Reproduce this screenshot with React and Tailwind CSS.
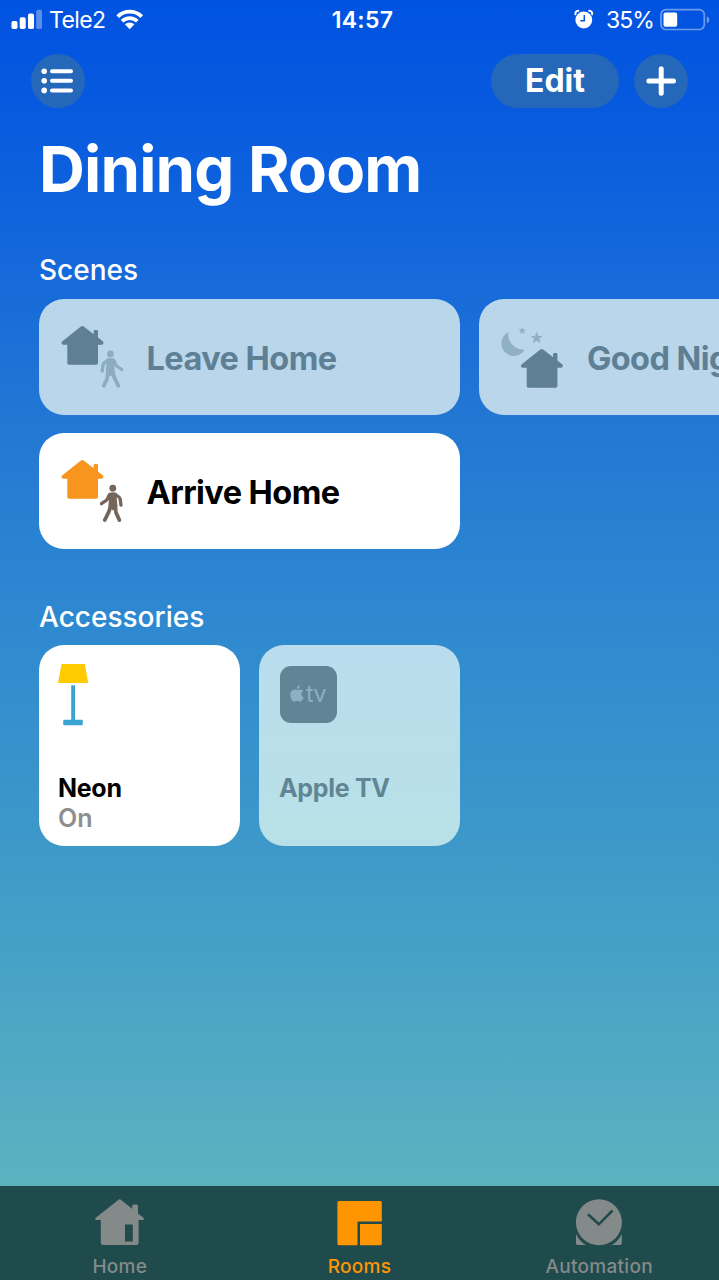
import React from "react";

function House({ x = 0, y = 0, fill }) {
  return (
    <path
      transform={`translate(${x} ${y})`}
      fill={fill}
      d="M28.9 11.5Q30.3 10.4 31.7 11.5L41.7 19.3V16.3Q41.7 15 43 15H44.7Q46 15 46 16.3V22.6L51 26.6Q52 27.8 51.1 29.1Q50.6 29.8 49.6 29.8H46V47.9Q46 49.7 44.2 49.7H17.1Q15.3 49.7 15.3 47.9V29.8H11.6Q10.4 29.8 9.8 29Q9 27.7 10.1 26.6Z"
    />
  );
}

function Walker({ color, transform }) {
  return (
    <g transform={transform} stroke={color} fill={color} strokeLinecap="round" strokeLinejoin="round">
      <circle cx="58.4" cy="39" r="3.4" stroke="none" />
      <path stroke="none" d="M55 43.6Q58.3 42.6 61.8 43.6L63.8 46.4L62.4 51.2L62.8 57.6L58.3 61.4L53.6 57.6L54.4 50Z" />
      <path fill="none" strokeWidth="3.3" d="M55.8 45.3L52.1 48.1Q51.1 48.9 51 50.3L50.2 56M61.8 45.5L64 50.1Q64.4 50.9 65.3 51.5L69.7 54.5" />
      <path fill="none" strokeWidth="3.8" d="M56 56.6L55.3 62.6Q55 64.2 54.2 65.6L51.9 70.8M60.4 56.6L62.3 62.4L66.4 70.8" />
    </g>
  );
}

function LeaveIcon() {
  return (
    <svg className="-mt-[3px] size-20 shrink-0" viewBox="0 0 80 80">
      <House fill="#5f7f94" />
      <Walker color="#8cacc0" />
    </svg>
  );
}

function ArriveIcon() {
  return (
    <svg className="-mt-[3px] size-20 shrink-0" viewBox="0 0 80 80">
      <House fill="#f8951f" />
      <Walker color="#74665b" transform="translate(119.2 .2) scale(-1 1)" />
    </svg>
  );
}

const STAR = "M0 -1L.25 -.33L.95 -.31L.4 .13L.59 .81L0 .42L-.59 .81L-.4 .13L-.95 -.31L-.25 -.33Z";

function NightIcon() {
  return (
    <svg className="-mt-[3px] size-20 shrink-0" viewBox="0 0 80 80">
      <path fill="#8fafc3" d="M16.4 17.2A12.5 12.5 0 1 0 32.8 34.6A15.3 15.3 0 0 1 16.4 17.2Z" />
      <path fill="#8fafc3" d={STAR} transform="translate(30.3 15.7) scale(3.9)" />
      <path fill="#8fafc3" d={STAR} transform="translate(44.7 23) scale(6.4)" />
      <House fill="#5f7f94" x={19.4} y={23} />
    </svg>
  );
}

function Scene({ icon, name, active }) {
  return (
    <div
      className={
        "flex h-[115.5px] w-[421px] shrink-0 items-center rounded-[25px] pl-[13px] text-[32.5px] font-bold " +
        (active ? "bg-white text-black" : "bg-[#b9d6eb] text-[#5f7f94]")
      }
    >
      {icon}
      <span className="ml-[14.5px] mt-[5px] whitespace-nowrap tracking-[-0.55px]">{name}</span>
    </div>
  );
}

function StatusBar() {
  return (
    <div className="grid h-10 grid-cols-[1fr_auto_1fr] items-center text-[23px] leading-10">
      <div className="flex items-center pl-[11px]">
        <svg className="h-10 w-8" viewBox="0 0 32 40" fill="white">
          <rect x=".5" y="21" width="6" height="8" rx="1.8" />
          <rect x="8.7" y="17.2" width="6" height="11.8" rx="1.8" />
          <rect x="17" y="13.4" width="6" height="15.6" rx="1.8" />
          <rect x="25.2" y="9.8" width="5.8" height="19.2" rx="1.8" opacity=".35" />
        </svg>
        <span className="ml-[6px] w-[57px] tracking-[-0.6px]">Tele2</span>
        <svg className="ml-[10px] h-10 w-7" viewBox="0 0 28 40" fill="none" stroke="white">
          <path strokeWidth="3.9" d="M1.7 16.6A17 17 0 0 1 25.7 16.6" />
          <path strokeWidth="3.7" d="M6.1 21.2A10.8 10.8 0 0 1 21.3 21.2" />
          <path fill="white" stroke="none" d="M8.9 24.3A7.2 7.2 0 0 1 18.5 24.3L13.7 29.2Z" />
        </svg>
      </div>
      <span className="ml-[6px] font-semibold tracking-[0.3px]">14:57</span>
      <div className="flex items-center justify-end pr-[9px]">
        <svg className="h-10 w-5" viewBox="0 0 20 40">
          <circle cx="9.8" cy="20" r="8.4" fill="white" />
          <path d="M1.5 14.2Q1 11.4 4.4 10.8M18.1 14.2Q18.6 11.4 15.2 10.8" fill="none" stroke="white" strokeWidth="2" strokeLinecap="round" />
          <path d="M10.3 15V20.8H6.3" fill="none" stroke="#0455dd" strokeWidth="1.5" />
        </svg>
        <span className="ml-[12px] w-[49px] whitespace-nowrap tracking-[-1px]">35%</span>
        <svg className="ml-[5px] h-10 w-[50px]" viewBox="0 0 50 40">
          <rect x="1" y="9.7" width="43.3" height="19.8" rx="5" fill="none" stroke="white" strokeOpacity=".42" strokeWidth="1.7" />
          <rect x="3.5" y="12.5" width="13.7" height="14.2" rx="2" fill="white" />
          <path d="M46.8 16.2Q49.4 17.4 49.4 19.7Q49.4 22 46.8 23.2Z" fill="white" opacity=".42" />
        </svg>
      </div>
    </div>
  );
}

function Toolbar() {
  return (
    <div className="mt-[14px] flex h-[54px] items-center pl-[31px] pr-[31px]">
      <button className="size-[54px] rounded-full bg-[#2567b9]">
        <svg className="size-[54px]" viewBox="0 0 54 54" fill="white">
          <circle cx="13.2" cy="17.2" r="2.8" />
          <circle cx="13.2" cy="26.8" r="2.8" />
          <circle cx="13.2" cy="36.4" r="2.8" />
          <path stroke="white" strokeWidth="4" strokeLinecap="round" d="M21 17.2H40M21 26.8H40M21 36.4H40" />
        </svg>
      </button>
      <button className="ml-auto h-[54px] w-[128px] rounded-full bg-[#2567b9] text-[32px] font-bold">
        Edit
      </button>
      <button className="ml-[15px] size-[54px] rounded-full bg-[#2567b9]">
        <svg className="size-[54px]" viewBox="0 0 54 54">
          <path stroke="white" strokeWidth="5" strokeLinecap="round" d="M27.2 14.7V39.3M14.9 27H39.5" />
        </svg>
      </button>
    </div>
  );
}

function Lamp() {
  return (
    <svg className="h-16 w-8" viewBox="0 0 32 64">
      <path fill="#ffcb00" d="M3.6 1H26.8L30.2 20H0Z" />
      <path fill="#3aa4d2" d="M13.2 22.3H17V57H13.2Z" />
      <rect x="5.2" y="56.8" width="19.6" height="5.5" rx="1.2" fill="#3aa4d2" />
    </svg>
  );
}

function AppleTvIcon() {
  return (
    <div className="flex h-[57px] w-[57.5px] items-center rounded-[11px] bg-[#608595] pl-[10px] text-[#8cb1c0]">
      <svg className="-mt-[2px] h-[17px] w-[14px] shrink-0" viewBox="0 0 14 17" fill="currentColor">
        <path d="M9.8 0Q10 1.7 8.9 2.9Q8 4 6.9 3.9Q6.8 2.4 7.8 1.3Q8.7 .2 9.8 0ZM7.1 5.1C7.9 5.1 8.7 4.3 10.1 4.4C11.6 4.5 12.6 5.2 13.2 6.1C10.5 7.8 10.9 11.3 13.6 12.4C12.9 14.3 11.7 16.5 10.2 16.6C9.1 16.7 8.7 15.9 7.2 15.9C5.8 15.9 5.4 16.6 4.3 16.6C2.4 16.7 .3 13.1 .3 10C.3 6.5 2.2 4.5 4.4 4.4C5.6 4.4 6.4 5.1 7.1 5.1Z" />
      </svg>
      <span className="-mt-px ml-[2.5px] text-[23px] font-normal leading-none tracking-[-0.4px]">tv</span>
    </div>
  );
}

function HomeTabIcon() {
  return (
    <svg className="h-[50px] w-[52px]" viewBox="0 0 52 50">
      <path
        fill="#838a89"
        fillRule="evenodd"
        d="M24.9 1.6Q25.7 1 26.5 1.6L38.2 10.7V8Q38.2 6.5 39.7 6.5H42.5Q44 6.5 44 8V15.5L49.7 20Q50.7 21.8 48.8 22H44.6V44.5Q44.6 47 42.1 47H9.3Q6.8 47 6.8 44.5V22H2.4Q.4 21.7 1.5 20ZM31 26.6V43.6H38.8V26.6Z"
      />
    </svg>
  );
}

function RoomsTabIcon() {
  return (
    <svg className="h-[50px] w-[52px]" viewBox="0 0 52 50" fill="#ff9500">
      <path d="M6 2.9H47.2Q48.8 2.9 48.8 4.5V23.4H24.5V47.3H6Q4.4 47.3 4.4 45.7V4.5Q4.4 2.9 6 2.9Z" />
      <path d="M27 26H48.8V45.7Q48.8 47.3 47.2 47.3H27Z" />
    </svg>
  );
}

function AutomationTabIcon() {
  return (
    <svg className="h-[50px] w-[52px]" viewBox="0 0 52 50" fill="#838a89">
      <path d="M3 36Q6.4 43.5 12.9 46.9H4.6Q3 46.9 3 45.3ZM48.8 36Q45.4 43.5 38.9 46.9H47.2Q48.8 46.9 48.8 45.3Z" />
      <circle cx="25.9" cy="24.2" r="23" />
      <path fill="none" stroke="#204b4d" strokeWidth="2.6" d="M15 16.2L25.8 26.3L39.5 12.5" />
    </svg>
  );
}

function Tab({ icon, label, active }) {
  return (
    <div
      className={
        "flex flex-col items-center pt-[12px] text-[19px] font-medium leading-[24px] tracking-[0.3px] " +
        (active ? "text-[#ff9500]" : "text-[#838a89]")
      }
    >
      {icon}
      <span className="mt-[7px]">{label}</span>
    </div>
  );
}

export default function App() {
  return (
    <div className="flex h-[1280px] w-[719px] flex-col overflow-hidden bg-[linear-gradient(180deg,#0052e1_0px,#085bde_120px,#176bda_290px,#2378d3_430px,#2d87d1_600px,#3e99c9_850px,#5bb3c0_1186px)] font-['Inter',sans-serif] text-white">
      <StatusBar />
      <Toolbar />
      <h1 className="ml-[39px] mt-[21px] text-[63.5px] font-bold leading-[80px] tracking-[-0.8px]">Dining Room</h1>

      <h2 className="ml-[39px] mt-[44px] text-[28px] font-medium leading-[34px]">Scenes</h2>
      <div className="ml-[39px] mt-[12px] flex flex-col gap-[18.5px]">
        <div className="flex gap-[19.4px]">
          <Scene icon={<LeaveIcon />} name="Leave Home" />
          <Scene icon={<NightIcon />} name="Good Night" />
        </div>
        <Scene icon={<ArriveIcon />} name="Arrive Home" active />
      </div>

      <h2 className="ml-[39px] mt-[51px] text-[28px] font-medium leading-[34px]">Accessories</h2>
      <div className="ml-[39px] mt-[11.5px] flex gap-[19px] text-[25px] font-bold leading-[30px] tracking-[-0.3px]">
        <div className="flex size-[201px] flex-col rounded-[25px] bg-white pb-[13px] pl-[19px] pt-[18px]">
          <Lamp />
          <div className="mt-auto text-black">Neon</div>
          <div className="font-semibold tracking-normal text-[#8e8e8e]">On</div>
        </div>
        <div className="flex h-[201px] w-[201px] flex-col rounded-[25px] bg-linear-to-b from-[#b9dded] to-[#b8e1e7] pb-[43px] pl-[20.5px] pt-[21px]">
          <AppleTvIcon />
          <div className="-ml-[0.5px] mt-auto text-[#608595]">Apple TV</div>
        </div>
      </div>

      <nav className="mt-auto grid h-[94px] grid-cols-3 bg-[#204b4d]">
        <Tab icon={<HomeTabIcon />} label="Home" />
        <Tab icon={<RoomsTabIcon />} label="Rooms" active />
        <Tab icon={<AutomationTabIcon />} label="Automation" />
      </nav>
    </div>
  );
}
